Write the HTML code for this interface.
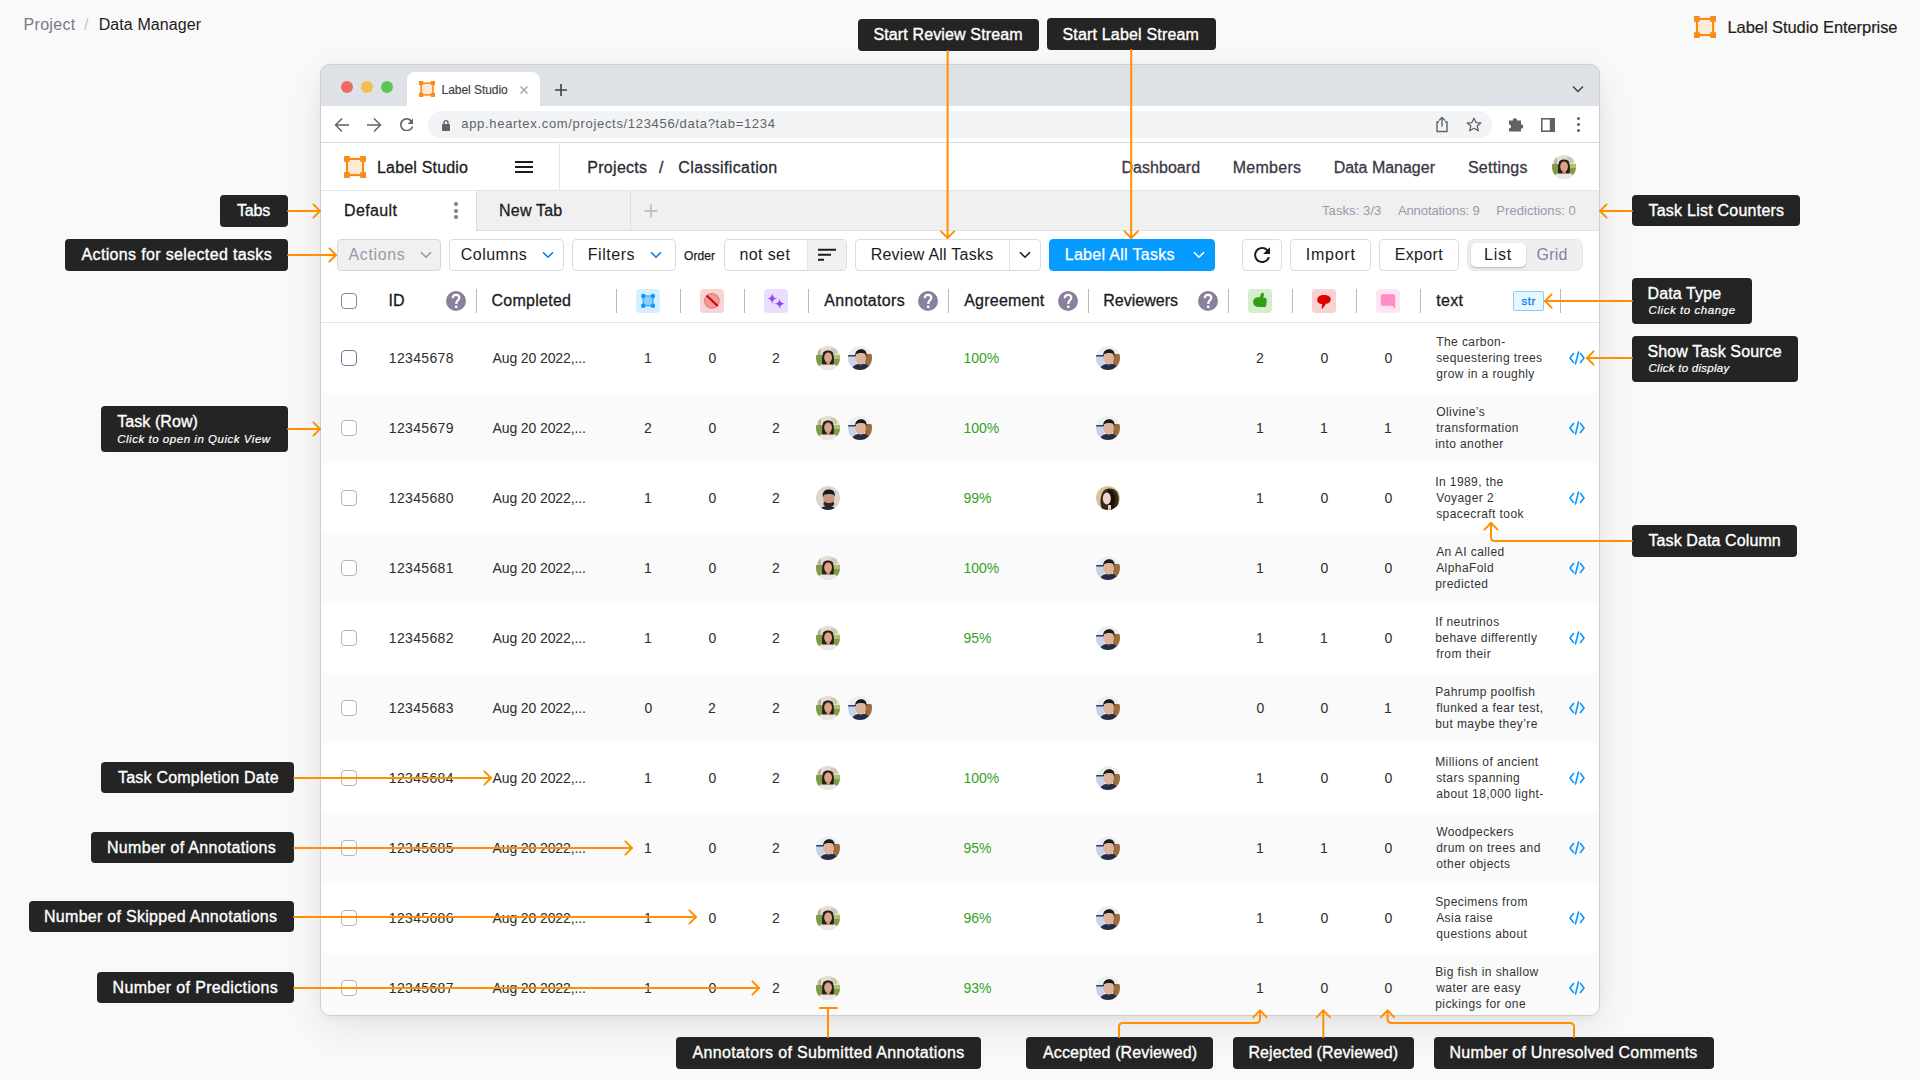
<!DOCTYPE html><html><head><meta charset="utf-8"><style>
*{box-sizing:border-box;margin:0;padding:0}
html,body{width:1920px;height:1080px;overflow:hidden;background:#f9f9f9;font-family:"Liberation Sans", sans-serif;color:#1f1f1f}
.abs{position:absolute}
.t{position:absolute;white-space:nowrap;line-height:1}
.win{position:absolute;left:320px;top:64px;width:1280px;height:952px;border-radius:10px;overflow:hidden;background:#fff;box-shadow:0 12px 40px rgba(0,0,0,.085),0 2px 8px rgba(0,0,0,.04)}
.wb{position:absolute;left:320px;top:64px;width:1280px;height:952px;border-radius:10px;border:1px solid #cfcfd2}
.in{position:absolute;left:-320px;top:-64px;width:1920px;height:1080px}
.btn{position:absolute;top:239px;height:32px;border:1px solid #dcdce0;border-radius:4px;background:#fff}
.co{position:absolute;background:#242424;border-radius:4px}
.sep{position:absolute;width:1px;height:24px;top:289px;background:#b9b9bd}
.q{position:absolute;width:20px;height:20px;top:291px;border-radius:50%;background:#8a7f9d}
.cb{position:absolute;width:16px;height:16px;border:1.3px solid #c9c5d1;border-radius:4px;background:#fff}
.av{position:absolute;width:24px;height:24px;border-radius:50%;overflow:hidden}
</style></head><body>
<div class="t" style="left:23.50px;top:16.60px;font-size:16px;color:#7f7490;letter-spacing:0.317px;">Project</div>
<div class="t" style="left:84.00px;top:16.60px;font-size:16px;color:#c5bfcf;">/</div>
<div class="t" style="left:98.70px;top:16.60px;font-size:16px;color:#1c1b22;letter-spacing:0.091px;">Data Manager</div>
<svg class="abs" style="left:1694px;top:16px" width="22" height="22" viewBox="0 0 22 22"><rect x="2.9" y="2.9" width="16.2" height="16.2" fill="#fde9d5" stroke="#ff8500" stroke-width="2"/><rect x="0" y="0" width="5.8" height="5.8" fill="#f98b18"/><rect x="16.2" y="0" width="5.8" height="5.8" fill="#f98b18"/><rect x="0" y="16.2" width="5.8" height="5.8" fill="#f98b18"/><rect x="16.2" y="16.2" width="5.8" height="5.8" fill="#f98b18"/></svg>
<div class="t" style="left:1727.50px;top:19.10px;font-size:16.5px;color:#1f1f22;letter-spacing:-0.068px;-webkit-text-stroke:0.2px #1f1f22;">Label Studio Enterprise</div>
<div class="win"><div class="in">
<div class="abs" style="left:320px;top:64px;width:1280px;height:42px;background:#dee1e6"></div>
<div class="abs" style="left:341px;top:80.5px;width:12px;height:12px;border-radius:50%;background:#ed6a5e"></div>
<div class="abs" style="left:361px;top:80.5px;width:12px;height:12px;border-radius:50%;background:#f4bf4f"></div>
<div class="abs" style="left:381px;top:80.5px;width:12px;height:12px;border-radius:50%;background:#61c554"></div>
<div class="abs" style="left:407px;top:72px;width:133px;height:34px;background:#fff;border-radius:8px 8px 0 0"></div>
<svg class="abs" style="left:419px;top:81px" width="16" height="16" viewBox="0 0 22 22"><rect x="2.9" y="2.9" width="16.2" height="16.2" fill="#fde9d5" stroke="#ff8500" stroke-width="2"/><rect x="0" y="0" width="5.8" height="5.8" fill="#f98b18"/><rect x="16.2" y="0" width="5.8" height="5.8" fill="#f98b18"/><rect x="0" y="16.2" width="5.8" height="5.8" fill="#f98b18"/><rect x="16.2" y="16.2" width="5.8" height="5.8" fill="#f98b18"/></svg>
<div class="t" style="left:441.50px;top:83.70px;font-size:12px;color:#3c4043;letter-spacing:-0.045px;-webkit-text-stroke:0.15px #3c4043;">Label Studio</div>
<svg class="abs" style="left:519px;top:85px" width="10" height="10" viewBox="0 0 10 10"><path d="M1.5 1.5L8.5 8.5M8.5 1.5L1.5 8.5" stroke="#9aa0a6" stroke-width="1.2"/></svg>
<svg class="abs" style="left:554px;top:83px" width="14" height="14" viewBox="0 0 14 14"><path d="M7 1V13M1 7H13" stroke="#3c4043" stroke-width="1.6"/></svg>
<svg class="abs" style="left:1572px;top:84px" width="12" height="10" viewBox="0 0 12 10"><path d="M1 2.5L6 7.5L11 2.5" fill="none" stroke="#3c4043" stroke-width="1.5"/></svg>
<div class="abs" style="left:320px;top:142px;width:1280px;height:1px;background:#dadce0"></div>
<svg class="abs" style="left:333px;top:115.5px" width="18" height="18" viewBox="0 0 18 18"><path d="M16 9H3M9 2.5L2.5 9L9 15.5" fill="none" stroke="#5f6368" stroke-width="1.45"/></svg>
<svg class="abs" style="left:365px;top:115.5px" width="18" height="18" viewBox="0 0 18 18"><path d="M2 9H15M9 2.5L15.5 9L9 15.5" fill="none" stroke="#5f6368" stroke-width="1.45"/></svg>
<svg class="abs" style="left:399.5px;top:117.8px" width="13.5" height="13.5" viewBox="4 4 16 16"><path d="M17.65 6.35A7.958 7.958 0 0 0 12 4c-4.42 0-7.99 3.58-7.99 8s3.57 8 7.99 8c3.73 0 6.84-2.55 7.73-6h-2.08A5.99 5.99 0 0 1 12 18c-3.31 0-6-2.69-6-6s2.69-6 6-6c1.66 0 3.14.69 4.22 1.78L13 11h7V4l-2.35 2.35z" fill="#5f6368"/></svg>
<div class="abs" style="left:428px;top:110.5px;width:1064px;height:27.5px;border-radius:14px;background:#f1f3f4"></div>
<svg class="abs" style="left:441px;top:117.5px" width="10" height="14" viewBox="0 0 10 14"><path d="M3 6V4.6A2 2 0 0 1 7 4.6V6" fill="none" stroke="#5f6368" stroke-width="1.4"/><rect x="1" y="6" width="8" height="7" rx="1" fill="#5f6368"/></svg>
<div class="t" style="left:461.30px;top:117.45px;font-size:13px;color:#5f6368;letter-spacing:0.680px;">app.heartex.com/projects/123456/data?tab=1234</div>
<svg class="abs" style="left:1434px;top:116px" width="16" height="17" viewBox="0 0 16 17"><path d="M5 6H3V15.5H13V6H11" fill="none" stroke="#5f6368" stroke-width="1.4"/><path d="M8 1.5V10.5M5 4.5L8 1.5L11 4.5" fill="none" stroke="#5f6368" stroke-width="1.4"/></svg>
<svg class="abs" style="left:1466px;top:117px" width="16" height="15" viewBox="0 0 16 15"><path d="M8 1.2L10 5.6L14.8 6L11.2 9.1L12.3 13.8L8 11.3L3.7 13.8L4.8 9.1L1.2 6L6 5.6Z" fill="none" stroke="#5f6368" stroke-width="1.3" stroke-linejoin="round"/></svg>
<svg class="abs" style="left:1508px;top:116px" width="17" height="17" viewBox="0 0 17 17"><path d="M1 4.5H4.6A2.3 2.3 0 0 1 9.2 4.5H13V8.2A2.3 2.3 0 0 1 13 12.8V15.5H1V12.6A2 2 0 0 0 1 8.6Z" fill="#5f6368"/></svg>
<svg class="abs" style="left:1541px;top:117.5px" width="14" height="14" viewBox="0 0 14 14"><rect x="0.8" y="0.8" width="12.4" height="12.4" fill="none" stroke="#5f6368" stroke-width="1.6"/><rect x="8.8" y="0.8" width="4.4" height="12.4" fill="#5f6368"/></svg>
<div class="abs" style="left:1577px;top:117.0px;width:3px;height:3px;border-radius:50%;background:#5f6368"></div>
<div class="abs" style="left:1577px;top:123.0px;width:3px;height:3px;border-radius:50%;background:#5f6368"></div>
<div class="abs" style="left:1577px;top:129.0px;width:3px;height:3px;border-radius:50%;background:#5f6368"></div>
<div class="abs" style="left:320px;top:190px;width:1280px;height:1px;background:#e6e6ea"></div>
<svg class="abs" style="left:344px;top:156px" width="22" height="22" viewBox="0 0 22 22"><rect x="2.9" y="2.9" width="16.2" height="16.2" fill="#fde9d5" stroke="#ff8500" stroke-width="2"/><rect x="0" y="0" width="5.8" height="5.8" fill="#f98b18"/><rect x="16.2" y="0" width="5.8" height="5.8" fill="#f98b18"/><rect x="0" y="16.2" width="5.8" height="5.8" fill="#f98b18"/><rect x="16.2" y="16.2" width="5.8" height="5.8" fill="#f98b18"/></svg>
<div class="t" style="left:377.00px;top:160.40px;font-size:16px;color:#1c1b22;letter-spacing:0.182px;-webkit-text-stroke:0.3px #1c1b22;">Label Studio</div>
<div class="abs" style="left:515px;top:161px;width:18px;height:2px;background:#1c1b22"></div>
<div class="abs" style="left:515px;top:166px;width:18px;height:2px;background:#1c1b22"></div>
<div class="abs" style="left:515px;top:171px;width:18px;height:2px;background:#1c1b22"></div>
<div class="abs" style="left:559px;top:143px;width:1px;height:47px;background:#e6e6ea"></div>
<div class="t" style="left:587.30px;top:160.00px;font-size:16px;color:#2c2b33;letter-spacing:0.286px;-webkit-text-stroke:0.3px #2c2b33;">Projects</div>
<div class="t" style="left:659.00px;top:160.00px;font-size:16px;color:#2c2b33;-webkit-text-stroke:0.3px #2c2b33;">/</div>
<div class="t" style="left:678.30px;top:160.00px;font-size:16px;color:#2c2b33;letter-spacing:0.362px;-webkit-text-stroke:0.3px #2c2b33;">Classification</div>
<div class="t" style="left:1121.50px;top:159.70px;font-size:16px;color:#3b3846;letter-spacing:0.037px;-webkit-text-stroke:0.3px #3b3846;">Dashboard</div>
<div class="t" style="left:1232.70px;top:159.70px;font-size:16px;color:#3b3846;letter-spacing:0.283px;-webkit-text-stroke:0.3px #3b3846;">Members</div>
<div class="t" style="left:1333.70px;top:159.70px;font-size:16px;color:#3b3846;letter-spacing:-0.009px;-webkit-text-stroke:0.3px #3b3846;">Data Manager</div>
<div class="t" style="left:1467.90px;top:159.70px;font-size:16px;color:#3b3846;letter-spacing:0.257px;-webkit-text-stroke:0.3px #3b3846;">Settings</div>
<div class="av" style="left:1552px;top:155px"><svg width="24" height="24" viewBox="0 0 24 24"><rect width="24" height="24" fill="#e3ddd2"/><rect x="2" y="1" width="3" height="9" fill="#bfb3a2"/><rect x="15" y="2" width="6" height="6" fill="#d2c6b4"/><rect y="9" width="24" height="11" fill="#7c9c48"/><rect x="16" y="9" width="8" height="4" fill="#a9c56a"/><ellipse cx="12" cy="25" rx="11.5" ry="8" fill="#e9e6e3"/><path d="M6.2 18.5C5.8 13 6 9 7.5 6.2C9 3.8 15 3.8 16.5 6.2C18 9 18.2 13 17.6 18.5Z" fill="#2e1d14"/><ellipse cx="12.1" cy="11.6" rx="3.9" ry="5" fill="#d8a48a"/><rect x="10.6" y="15" width="3.2" height="3.5" fill="#cf9a80"/></svg></div>
<div class="abs" style="left:320px;top:191px;width:1280px;height:40px;background:#f0f0f0"></div>
<div class="abs" style="left:320px;top:230px;width:1280px;height:1px;background:#dedee3"></div>
<div class="abs" style="left:320px;top:191px;width:156px;height:40px;background:#fff"></div>
<div class="t" style="left:344.00px;top:203.20px;font-size:16px;color:#1c1b22;letter-spacing:0.383px;-webkit-text-stroke:0.3px #1c1b22;">Default</div>
<div class="abs" style="left:454px;top:202px;width:4px;height:4px;border-radius:50%;background:#7d7a86"></div>
<div class="abs" style="left:454px;top:208.5px;width:4px;height:4px;border-radius:50%;background:#7d7a86"></div>
<div class="abs" style="left:454px;top:215px;width:4px;height:4px;border-radius:50%;background:#7d7a86"></div>
<div class="abs" style="left:476px;top:191px;width:1px;height:40px;background:#dedee3"></div>
<div class="t" style="left:499.00px;top:203.20px;font-size:16px;color:#1c1b22;letter-spacing:0.217px;-webkit-text-stroke:0.3px #1c1b22;">New Tab</div>
<div class="abs" style="left:630px;top:191px;width:1px;height:40px;background:#dedee3"></div>
<svg class="abs" style="left:644px;top:204px" width="14" height="14" viewBox="0 0 14 14"><path d="M7 0.5V13.5M0.5 7H13.5" stroke="#b5b5bb" stroke-width="1.5"/></svg>
<div class="t" style="left:1322.00px;top:204.00px;font-size:13px;color:#9d97aa;letter-spacing:0.089px;">Tasks: 3/3</div>
<div class="t" style="left:1397.90px;top:204.00px;font-size:13px;color:#9d97aa;letter-spacing:-0.092px;">Annotations: 9</div>
<div class="t" style="left:1496.30px;top:204.00px;font-size:13px;color:#9d97aa;letter-spacing:0.054px;">Predictions: 0</div>
<div class="btn" style="left:337px;width:104px;background:#f0f0f0;border-color:#d8d8dc"></div>
<div class="t" style="left:348.50px;top:247.45px;font-size:16px;color:#9d97aa;letter-spacing:0.650px;">Actions</div>
<svg class="abs" style="left:420px;top:251px" width="12" height="8" viewBox="0 0 12 8"><path d="M1 1.2L6 6.2L11 1.2" fill="none" stroke="#9d97aa" stroke-width="1.6"/></svg>
<div class="btn" style="left:449px;width:115px"></div>
<div class="t" style="left:460.70px;top:247.45px;font-size:16px;color:#1c1b22;letter-spacing:0.500px;">Columns</div>
<svg class="abs" style="left:542px;top:251px" width="12" height="8" viewBox="0 0 12 8"><path d="M1 1.2L6 6.2L11 1.2" fill="none" stroke="#0d7cf2" stroke-width="1.6"/></svg>
<div class="btn" style="left:572px;width:104px"></div>
<div class="t" style="left:587.75px;top:247.45px;font-size:16px;color:#1c1b22;letter-spacing:0.542px;">Filters</div>
<svg class="abs" style="left:650px;top:251px" width="12" height="8" viewBox="0 0 12 8"><path d="M1 1.2L6 6.2L11 1.2" fill="none" stroke="#0d7cf2" stroke-width="1.6"/></svg>
<div class="t" style="left:684.00px;top:249.50px;font-size:12px;color:#1c1b22;letter-spacing:0.100px;-webkit-text-stroke:0.25px #1c1b22;">Order</div>
<div class="btn" style="left:724px;width:123px;overflow:hidden"><div class="abs" style="left:82px;top:0;width:40px;height:30px;background:#f0f0f0;border-left:1px solid #e4e4e8"></div></div>
<div class="t" style="left:739.40px;top:247.45px;font-size:16px;color:#1c1b22;letter-spacing:0.400px;">not set</div>
<svg class="abs" style="left:817px;top:248px" width="20" height="14" viewBox="0 0 20 14"><path d="M1 1.8H19M1 6.8H14M1 11.8H7" stroke="#1c1b22" stroke-width="2"/></svg>
<div class="btn" style="left:855px;width:186px"><div class="abs" style="left:153px;top:0;width:1px;height:30px;background:#e4e4e8"></div></div>
<div class="t" style="left:870.70px;top:247.45px;font-size:16px;color:#1c1b22;letter-spacing:0.240px;">Review All Tasks</div>
<svg class="abs" style="left:1019px;top:251px" width="12" height="8" viewBox="0 0 12 8"><path d="M1 1.2L6 6.2L11 1.2" fill="none" stroke="#1c1b22" stroke-width="1.6"/></svg>
<div class="btn" style="left:1049px;width:166px;background:#069bff;border-color:#069bff"></div>
<div class="t" style="left:1064.70px;top:247.45px;font-size:16px;color:#fff;letter-spacing:0.307px;-webkit-text-stroke:0.25px #fff;">Label All Tasks</div>
<svg class="abs" style="left:1193px;top:251px" width="12" height="8" viewBox="0 0 12 8"><path d="M1 1.2L6 6.2L11 1.2" fill="none" stroke="#fff" stroke-width="1.6"/></svg>
<div class="btn" style="left:1242px;width:40px"></div>
<svg class="abs" style="left:1254px;top:247px" width="16.3" height="16" viewBox="4 4 16 16"><path d="M17.65 6.35A7.958 7.958 0 0 0 12 4c-4.42 0-7.99 3.58-7.99 8s3.57 8 7.99 8c3.73 0 6.84-2.55 7.73-6h-2.08A5.99 5.99 0 0 1 12 18c-3.31 0-6-2.69-6-6s2.69-6 6-6c1.66 0 3.14.69 4.22 1.78L13 11h7V4l-2.35 2.35z" fill="#1c1b22"/></svg>
<div class="btn" style="left:1290px;width:81px"></div>
<div class="t" style="left:1305.75px;top:247.45px;font-size:16px;color:#1c1b22;letter-spacing:0.750px;">Import</div>
<div class="btn" style="left:1379px;width:80px"></div>
<div class="t" style="left:1394.75px;top:247.45px;font-size:16px;color:#1c1b22;letter-spacing:0.350px;">Export</div>
<div class="abs" style="left:1467px;top:239px;width:116px;height:32px;border-radius:7px;background:#efeff1;border:1px solid #e6e6ea"></div>
<div class="abs" style="left:1471px;top:243px;width:55px;height:24px;border-radius:5px;background:#fff;box-shadow:0 1px 2px rgba(0,0,0,.25)"></div>
<div class="t" style="left:1484.00px;top:247.45px;font-size:16px;color:#1c1b22;letter-spacing:0.750px;">List</div>
<div class="t" style="left:1536.50px;top:247.45px;font-size:16px;color:#8b80a0;letter-spacing:0.250px;">Grid</div>
<div class="abs" style="left:320px;top:322px;width:1280px;height:1px;background:#e6e6ea"></div>
<div class="cb" style="left:341px;top:293px;border-color:#8b80a0"></div>
<div class="t" style="left:388.50px;top:293.45px;font-size:16px;color:#1c1b22;-webkit-text-stroke:0.3px #1c1b22;">ID</div>
<svg class="abs" style="left:446px;top:291px" width="20" height="20" viewBox="0 0 20 20"><circle cx="10" cy="10" r="10" fill="#8a7f9d"/><path d="M6.7 7.3C6.7 4.9 8.2 3.8 10.1 3.8C12 3.8 13.3 5 13.3 6.7C13.3 9 10.3 9.5 10.3 12.3V13" fill="none" stroke="#fff" stroke-width="2.2"/><rect x="9" y="14.6" width="2.4" height="2.4" fill="#fff"/></svg>
<div class="sep" style="left:476px"></div>
<div class="sep" style="left:616px"></div>
<div class="sep" style="left:680px"></div>
<div class="sep" style="left:744px"></div>
<div class="sep" style="left:808px"></div>
<div class="sep" style="left:948px"></div>
<div class="sep" style="left:1088px"></div>
<div class="sep" style="left:1228px"></div>
<div class="sep" style="left:1292px"></div>
<div class="sep" style="left:1356px"></div>
<div class="sep" style="left:1420px"></div>
<div class="sep" style="left:1560px"></div>
<div class="t" style="left:491.50px;top:293.45px;font-size:16px;color:#1c1b22;letter-spacing:0.262px;-webkit-text-stroke:0.3px #1c1b22;">Completed</div>
<div class="abs" style="left:636px;top:289px;width:24px;height:24px;border-radius:4px;background:#d6efff"><svg class="abs" style="left:0;top:0" width="24" height="24" viewBox="0 0 24 24"><rect x="7.3" y="7" width="9.6" height="9.7" fill="#8dd0ff" stroke="#4db3ff" stroke-width="1.6"/><circle cx="7.3" cy="7" r="2.3" fill="#0a99ff"/><circle cx="16.9" cy="7" r="2.3" fill="#0a99ff"/><circle cx="7.3" cy="16.7" r="2.3" fill="#0a99ff"/><circle cx="16.9" cy="16.7" r="2.3" fill="#0a99ff"/></svg></div>
<div class="abs" style="left:700px;top:289px;width:24px;height:24px;border-radius:4px;background:#f9d4d4"><svg class="abs" style="left:0;top:0" width="24" height="24" viewBox="0 0 24 24"><circle cx="11.9" cy="11.8" r="7.2" fill="#f19c9c" stroke="#ea8080" stroke-width="1.4"/><path d="M6.6 6.5L17.7 17.1" stroke="#dc0000" stroke-width="2.1"/></svg></div>
<div class="abs" style="left:764px;top:289px;width:24px;height:24px;border-radius:4px;background:#ebdefd"><svg class="abs" style="left:0;top:0" width="24" height="24" viewBox="0 0 24 24"><path d="M8.2 4.199999999999999Q8.578 9.222 13.6 9.6Q8.578 9.978 8.2 15.0Q7.821999999999999 9.978 2.799999999999999 9.6Q7.821999999999999 9.222 8.2 4.199999999999999ZM15.7 9.399999999999999Q16.070999999999998 14.328999999999999 21.0 14.7Q16.070999999999998 15.071 15.7 20.0Q15.328999999999999 15.071 10.399999999999999 14.7Q15.328999999999999 14.328999999999999 15.7 9.399999999999999Z" fill="#9146ff"/></svg></div>
<div class="t" style="left:824.20px;top:293.45px;font-size:16px;color:#1c1b22;letter-spacing:0.356px;-webkit-text-stroke:0.3px #1c1b22;">Annotators</div>
<svg class="abs" style="left:918px;top:291px" width="20" height="20" viewBox="0 0 20 20"><circle cx="10" cy="10" r="10" fill="#8a7f9d"/><path d="M6.7 7.3C6.7 4.9 8.2 3.8 10.1 3.8C12 3.8 13.3 5 13.3 6.7C13.3 9 10.3 9.5 10.3 12.3V13" fill="none" stroke="#fff" stroke-width="2.2"/><rect x="9" y="14.6" width="2.4" height="2.4" fill="#fff"/></svg>
<div class="t" style="left:964.20px;top:293.45px;font-size:16px;color:#1c1b22;letter-spacing:0.225px;-webkit-text-stroke:0.3px #1c1b22;">Agreement</div>
<svg class="abs" style="left:1058px;top:291px" width="20" height="20" viewBox="0 0 20 20"><circle cx="10" cy="10" r="10" fill="#8a7f9d"/><path d="M6.7 7.3C6.7 4.9 8.2 3.8 10.1 3.8C12 3.8 13.3 5 13.3 6.7C13.3 9 10.3 9.5 10.3 12.3V13" fill="none" stroke="#fff" stroke-width="2.2"/><rect x="9" y="14.6" width="2.4" height="2.4" fill="#fff"/></svg>
<div class="t" style="left:1103.30px;top:293.45px;font-size:16px;color:#1c1b22;-webkit-text-stroke:0.3px #1c1b22;">Reviewers</div>
<svg class="abs" style="left:1198px;top:291px" width="20" height="20" viewBox="0 0 20 20"><circle cx="10" cy="10" r="10" fill="#8a7f9d"/><path d="M6.7 7.3C6.7 4.9 8.2 3.8 10.1 3.8C12 3.8 13.3 5 13.3 6.7C13.3 9 10.3 9.5 10.3 12.3V13" fill="none" stroke="#fff" stroke-width="2.2"/><rect x="9" y="14.6" width="2.4" height="2.4" fill="#fff"/></svg>
<div class="abs" style="left:1248px;top:289px;width:24px;height:24px;border-radius:4px;background:#d5eccd"><svg class="abs" style="left:0;top:0" width="24" height="24" viewBox="0 0 24 24"><path d="M5.1 13C5.1 10 7.5 8.3 10.5 8.3L11.8 8.3L13 4.8C13.4 3.7 15.3 3.5 15.7 4.6C16.1 5.7 15.7 7.6 15.3 8.6L17.5 8.9C18.6 9.1 18.9 10.5 18.6 12.5L18.2 16.4C18 17.4 17.4 17.9 16.3 17.9L10 17.9C7 17.9 5.1 16 5.1 13Z" fill="#2ea011"/></svg></div>
<div class="abs" style="left:1312px;top:289px;width:24px;height:24px;border-radius:4px;background:#f9d3d3"><svg class="abs" style="left:0;top:0" width="24" height="24" viewBox="0 0 24 24"><path d="M12 5.9C16 5.9 18.8 7.5 18.8 10.5C18.8 13.2 16.5 14.5 14 14.8L10.9 19.3C10.3 20.1 9.4 19.8 9.6 18.9L10.2 15.2C7 15.1 5.2 13.6 5.2 11C5.2 7.7 8 5.9 12 5.9Z" fill="#e00000"/></svg></div>
<div class="abs" style="left:1376px;top:289px;width:24px;height:24px;border-radius:4px;background:#fde5f1"><svg class="abs" style="left:0;top:0" width="24" height="24" viewBox="0 0 24 24"><path d="M6.3 5.2H17.7Q19.2 5.2 19.2 6.7V19.5L16 16.7H6.3Q4.8 16.7 4.8 15.2V6.7Q4.8 5.2 6.3 5.2Z" fill="#ff8bc8"/></svg></div>
<div class="t" style="left:1436.25px;top:293.45px;font-size:16px;color:#1c1b22;letter-spacing:0.333px;-webkit-text-stroke:0.3px #1c1b22;">text</div>
<div class="abs" style="left:1513px;top:291px;width:31px;height:20px;border:1px solid #8ec9ff;background:#e6f9ff;border-radius:2px"></div>
<div class="t" style="left:1521.60px;top:296.40px;font-size:11.5px;color:#1a7cf3;letter-spacing:0.500px;-webkit-text-stroke:0.3px #1a7cf3;">str</div>
<div class="abs" style="left:320px;top:323px;width:1280px;height:70px;background:#fff"></div>
<div class="cb" style="left:341px;top:350px;border-color:#7f7393"></div>
<div class="t" style="left:388.75px;top:350.70px;font-size:14px;color:#2d2d2d;letter-spacing:0.343px;">12345678</div>
<div class="t" style="left:492.50px;top:350.70px;font-size:14px;color:#2d2d2d;letter-spacing:-0.107px;">Aug 20 2022,...</div>
<div class="t" style="left:644.00px;top:350.70px;font-size:14px;color:#2d2d2d;">1</div>
<div class="t" style="left:708.50px;top:350.70px;font-size:14px;color:#2d2d2d;">0</div>
<div class="t" style="left:772.00px;top:350.70px;font-size:14px;color:#2d2d2d;">2</div>
<div class="t" style="left:1256.00px;top:350.70px;font-size:14px;color:#2d2d2d;">2</div>
<div class="t" style="left:1320.50px;top:350.70px;font-size:14px;color:#2d2d2d;">0</div>
<div class="t" style="left:1384.50px;top:350.70px;font-size:14px;color:#2d2d2d;">0</div>
<div class="av" style="left:816px;top:346px"><svg width="24" height="24" viewBox="0 0 24 24"><rect width="24" height="24" fill="#e3ddd2"/><rect x="2" y="1" width="3" height="9" fill="#bfb3a2"/><rect x="15" y="2" width="6" height="6" fill="#d2c6b4"/><rect y="9" width="24" height="11" fill="#7c9c48"/><rect x="16" y="9" width="8" height="4" fill="#a9c56a"/><ellipse cx="12" cy="25" rx="11.5" ry="8" fill="#e9e6e3"/><path d="M6.2 18.5C5.8 13 6 9 7.5 6.2C9 3.8 15 3.8 16.5 6.2C18 9 18.2 13 17.6 18.5Z" fill="#2e1d14"/><ellipse cx="12.1" cy="11.6" rx="3.9" ry="5" fill="#d8a48a"/><rect x="10.6" y="15" width="3.2" height="3.5" fill="#cf9a80"/></svg></div>
<div class="av" style="left:848px;top:346px"><svg width="24" height="24" viewBox="0 0 24 24"><rect width="24" height="24" fill="#eceff2"/><rect x="0" y="9" width="8" height="12" fill="#c9d3e6"/><rect x="0" y="9" width="8" height="1.5" fill="#2c3a66"/><rect x="17" y="8" width="7" height="13" fill="#9b6c3e"/><path d="M3 24C5 19 9 17.5 13.5 17.5C18 17.5 21 19.5 22.5 24Z" fill="#252c45"/><ellipse cx="12.6" cy="12.3" rx="5.3" ry="6.3" fill="#dcb39d"/><path d="M7.2 10C6.8 4.8 10.5 3.2 13.3 3.2C16.8 3.2 19 5.2 18.6 10.5L17.6 8.2C15.5 6.6 10.5 6.6 8.2 8.2Z" fill="#1e1915"/></svg></div>
<div class="t" style="left:963.50px;top:350.70px;font-size:14px;color:#35a21f;">100%</div>
<div class="av" style="left:1096px;top:346px"><svg width="24" height="24" viewBox="0 0 24 24"><rect width="24" height="24" fill="#eceff2"/><rect x="0" y="9" width="8" height="12" fill="#c9d3e6"/><rect x="0" y="9" width="8" height="1.5" fill="#2c3a66"/><rect x="17" y="8" width="7" height="13" fill="#9b6c3e"/><path d="M3 24C5 19 9 17.5 13.5 17.5C18 17.5 21 19.5 22.5 24Z" fill="#252c45"/><ellipse cx="12.6" cy="12.3" rx="5.3" ry="6.3" fill="#dcb39d"/><path d="M7.2 10C6.8 4.8 10.5 3.2 13.3 3.2C16.8 3.2 19 5.2 18.6 10.5L17.6 8.2C15.5 6.6 10.5 6.6 8.2 8.2Z" fill="#1e1915"/></svg></div>
<div class="t" style="left:1436.20px;top:336.20px;font-size:12px;color:#333;letter-spacing:0.424px;">The carbon-</div>
<div class="t" style="left:1436.20px;top:352.20px;font-size:12px;color:#333;letter-spacing:0.424px;">sequestering trees</div>
<div class="t" style="left:1436.20px;top:368.20px;font-size:12px;color:#333;letter-spacing:0.424px;">grow in a roughly</div>
<svg class="abs" style="left:1569px;top:351px" width="16" height="14" viewBox="0 0 16 14"><path d="M4.5 2.5L1 7L4.5 11.5M11.5 2.5L15 7L11.5 11.5M9.5 1L6.5 13" fill="none" stroke="#0d95ff" stroke-width="1.6" stroke-linecap="round" stroke-linejoin="round"/></svg>
<div class="abs" style="left:320px;top:393px;width:1280px;height:70px;background:#fafafa"></div>
<div class="cb" style="left:341px;top:420px;border-color:#b9b2c6"></div>
<div class="t" style="left:388.75px;top:420.70px;font-size:14px;color:#2d2d2d;letter-spacing:0.343px;">12345679</div>
<div class="t" style="left:492.50px;top:420.70px;font-size:14px;color:#2d2d2d;letter-spacing:-0.107px;">Aug 20 2022,...</div>
<div class="t" style="left:644.00px;top:420.70px;font-size:14px;color:#2d2d2d;">2</div>
<div class="t" style="left:708.50px;top:420.70px;font-size:14px;color:#2d2d2d;">0</div>
<div class="t" style="left:772.00px;top:420.70px;font-size:14px;color:#2d2d2d;">2</div>
<div class="t" style="left:1256.00px;top:420.70px;font-size:14px;color:#2d2d2d;">1</div>
<div class="t" style="left:1320.00px;top:420.70px;font-size:14px;color:#2d2d2d;">1</div>
<div class="t" style="left:1384.00px;top:420.70px;font-size:14px;color:#2d2d2d;">1</div>
<div class="av" style="left:816px;top:416px"><svg width="24" height="24" viewBox="0 0 24 24"><rect width="24" height="24" fill="#e3ddd2"/><rect x="2" y="1" width="3" height="9" fill="#bfb3a2"/><rect x="15" y="2" width="6" height="6" fill="#d2c6b4"/><rect y="9" width="24" height="11" fill="#7c9c48"/><rect x="16" y="9" width="8" height="4" fill="#a9c56a"/><ellipse cx="12" cy="25" rx="11.5" ry="8" fill="#e9e6e3"/><path d="M6.2 18.5C5.8 13 6 9 7.5 6.2C9 3.8 15 3.8 16.5 6.2C18 9 18.2 13 17.6 18.5Z" fill="#2e1d14"/><ellipse cx="12.1" cy="11.6" rx="3.9" ry="5" fill="#d8a48a"/><rect x="10.6" y="15" width="3.2" height="3.5" fill="#cf9a80"/></svg></div>
<div class="av" style="left:848px;top:416px"><svg width="24" height="24" viewBox="0 0 24 24"><rect width="24" height="24" fill="#eceff2"/><rect x="0" y="9" width="8" height="12" fill="#c9d3e6"/><rect x="0" y="9" width="8" height="1.5" fill="#2c3a66"/><rect x="17" y="8" width="7" height="13" fill="#9b6c3e"/><path d="M3 24C5 19 9 17.5 13.5 17.5C18 17.5 21 19.5 22.5 24Z" fill="#252c45"/><ellipse cx="12.6" cy="12.3" rx="5.3" ry="6.3" fill="#dcb39d"/><path d="M7.2 10C6.8 4.8 10.5 3.2 13.3 3.2C16.8 3.2 19 5.2 18.6 10.5L17.6 8.2C15.5 6.6 10.5 6.6 8.2 8.2Z" fill="#1e1915"/></svg></div>
<div class="t" style="left:963.50px;top:420.70px;font-size:14px;color:#35a21f;">100%</div>
<div class="av" style="left:1096px;top:416px"><svg width="24" height="24" viewBox="0 0 24 24"><rect width="24" height="24" fill="#eceff2"/><rect x="0" y="9" width="8" height="12" fill="#c9d3e6"/><rect x="0" y="9" width="8" height="1.5" fill="#2c3a66"/><rect x="17" y="8" width="7" height="13" fill="#9b6c3e"/><path d="M3 24C5 19 9 17.5 13.5 17.5C18 17.5 21 19.5 22.5 24Z" fill="#252c45"/><ellipse cx="12.6" cy="12.3" rx="5.3" ry="6.3" fill="#dcb39d"/><path d="M7.2 10C6.8 4.8 10.5 3.2 13.3 3.2C16.8 3.2 19 5.2 18.6 10.5L17.6 8.2C15.5 6.6 10.5 6.6 8.2 8.2Z" fill="#1e1915"/></svg></div>
<div class="t" style="left:1436.20px;top:406.20px;font-size:12px;color:#333;letter-spacing:0.424px;">Olivine’s</div>
<div class="t" style="left:1436.20px;top:422.20px;font-size:12px;color:#333;letter-spacing:0.424px;">transformation</div>
<div class="t" style="left:1435.20px;top:438.20px;font-size:12px;color:#333;letter-spacing:0.424px;">into another</div>
<svg class="abs" style="left:1569px;top:421px" width="16" height="14" viewBox="0 0 16 14"><path d="M4.5 2.5L1 7L4.5 11.5M11.5 2.5L15 7L11.5 11.5M9.5 1L6.5 13" fill="none" stroke="#0d95ff" stroke-width="1.6" stroke-linecap="round" stroke-linejoin="round"/></svg>
<div class="abs" style="left:320px;top:463px;width:1280px;height:70px;background:#fff"></div>
<div class="cb" style="left:341px;top:490px;border-color:#b9b2c6"></div>
<div class="t" style="left:388.75px;top:490.70px;font-size:14px;color:#2d2d2d;letter-spacing:0.343px;">12345680</div>
<div class="t" style="left:492.50px;top:490.70px;font-size:14px;color:#2d2d2d;letter-spacing:-0.107px;">Aug 20 2022,...</div>
<div class="t" style="left:644.00px;top:490.70px;font-size:14px;color:#2d2d2d;">1</div>
<div class="t" style="left:708.50px;top:490.70px;font-size:14px;color:#2d2d2d;">0</div>
<div class="t" style="left:772.00px;top:490.70px;font-size:14px;color:#2d2d2d;">2</div>
<div class="t" style="left:1256.00px;top:490.70px;font-size:14px;color:#2d2d2d;">1</div>
<div class="t" style="left:1320.50px;top:490.70px;font-size:14px;color:#2d2d2d;">0</div>
<div class="t" style="left:1384.50px;top:490.70px;font-size:14px;color:#2d2d2d;">0</div>
<div class="av" style="left:816px;top:486px"><svg width="24" height="24" viewBox="0 0 24 24"><rect width="24" height="24" fill="#ddd6d0"/><path d="M4 24C5 21 8 20 12 20C16 20 19 21 20 24Z" fill="#1f2636"/><ellipse cx="12.8" cy="12.8" rx="5.6" ry="7" fill="#c9987c"/><path d="M7.3 18C8.5 22 17 22 18.4 18L17.5 15.5C15.5 17.5 10.5 17.5 8.2 15.5Z" fill="#2a2622"/><path d="M6.8 11.5C6.2 4.5 9.5 3.5 12.8 3.5C17 3.5 19.5 5.5 18.8 11L17.8 8.8C15.5 7.8 10.5 7.8 8 9Z" fill="#151a26"/></svg></div>
<div class="t" style="left:963.50px;top:490.70px;font-size:14px;color:#35a21f;">99%</div>
<div class="av" style="left:1096px;top:486px"><svg width="24" height="24" viewBox="0 0 24 24"><rect width="24" height="24" fill="#d6c59c"/><path d="M7 24C3 20 4 8 8 4.5C12 1.5 18 2 21 6C24 12 23 20 19 24Z" fill="#3a2616"/><path d="M12 3.5C16 3.5 19.5 8 19 15C18.5 20 17 23 16 24H13Z" fill="#1a120c"/><ellipse cx="10.8" cy="12.5" rx="4" ry="6" fill="#ead6cf"/><rect x="12" y="19" width="3" height="5" fill="#e8d2c8"/></svg></div>
<div class="t" style="left:1435.20px;top:476.20px;font-size:12px;color:#333;letter-spacing:0.424px;">In 1989, the</div>
<div class="t" style="left:1436.20px;top:492.20px;font-size:12px;color:#333;letter-spacing:0.424px;">Voyager 2</div>
<div class="t" style="left:1436.20px;top:508.20px;font-size:12px;color:#333;letter-spacing:0.424px;">spacecraft took</div>
<svg class="abs" style="left:1569px;top:491px" width="16" height="14" viewBox="0 0 16 14"><path d="M4.5 2.5L1 7L4.5 11.5M11.5 2.5L15 7L11.5 11.5M9.5 1L6.5 13" fill="none" stroke="#0d95ff" stroke-width="1.6" stroke-linecap="round" stroke-linejoin="round"/></svg>
<div class="abs" style="left:320px;top:533px;width:1280px;height:70px;background:#fafafa"></div>
<div class="cb" style="left:341px;top:560px;border-color:#b9b2c6"></div>
<div class="t" style="left:388.75px;top:560.70px;font-size:14px;color:#2d2d2d;letter-spacing:0.343px;">12345681</div>
<div class="t" style="left:492.50px;top:560.70px;font-size:14px;color:#2d2d2d;letter-spacing:-0.107px;">Aug 20 2022,...</div>
<div class="t" style="left:644.00px;top:560.70px;font-size:14px;color:#2d2d2d;">1</div>
<div class="t" style="left:708.50px;top:560.70px;font-size:14px;color:#2d2d2d;">0</div>
<div class="t" style="left:772.00px;top:560.70px;font-size:14px;color:#2d2d2d;">2</div>
<div class="t" style="left:1256.00px;top:560.70px;font-size:14px;color:#2d2d2d;">1</div>
<div class="t" style="left:1320.50px;top:560.70px;font-size:14px;color:#2d2d2d;">0</div>
<div class="t" style="left:1384.50px;top:560.70px;font-size:14px;color:#2d2d2d;">0</div>
<div class="av" style="left:816px;top:556px"><svg width="24" height="24" viewBox="0 0 24 24"><rect width="24" height="24" fill="#e3ddd2"/><rect x="2" y="1" width="3" height="9" fill="#bfb3a2"/><rect x="15" y="2" width="6" height="6" fill="#d2c6b4"/><rect y="9" width="24" height="11" fill="#7c9c48"/><rect x="16" y="9" width="8" height="4" fill="#a9c56a"/><ellipse cx="12" cy="25" rx="11.5" ry="8" fill="#e9e6e3"/><path d="M6.2 18.5C5.8 13 6 9 7.5 6.2C9 3.8 15 3.8 16.5 6.2C18 9 18.2 13 17.6 18.5Z" fill="#2e1d14"/><ellipse cx="12.1" cy="11.6" rx="3.9" ry="5" fill="#d8a48a"/><rect x="10.6" y="15" width="3.2" height="3.5" fill="#cf9a80"/></svg></div>
<div class="t" style="left:963.50px;top:560.70px;font-size:14px;color:#35a21f;">100%</div>
<div class="av" style="left:1096px;top:556px"><svg width="24" height="24" viewBox="0 0 24 24"><rect width="24" height="24" fill="#eceff2"/><rect x="0" y="9" width="8" height="12" fill="#c9d3e6"/><rect x="0" y="9" width="8" height="1.5" fill="#2c3a66"/><rect x="17" y="8" width="7" height="13" fill="#9b6c3e"/><path d="M3 24C5 19 9 17.5 13.5 17.5C18 17.5 21 19.5 22.5 24Z" fill="#252c45"/><ellipse cx="12.6" cy="12.3" rx="5.3" ry="6.3" fill="#dcb39d"/><path d="M7.2 10C6.8 4.8 10.5 3.2 13.3 3.2C16.8 3.2 19 5.2 18.6 10.5L17.6 8.2C15.5 6.6 10.5 6.6 8.2 8.2Z" fill="#1e1915"/></svg></div>
<div class="t" style="left:1436.20px;top:546.20px;font-size:12px;color:#333;letter-spacing:0.424px;">An AI called</div>
<div class="t" style="left:1436.20px;top:562.20px;font-size:12px;color:#333;letter-spacing:0.424px;">AlphaFold</div>
<div class="t" style="left:1435.20px;top:578.20px;font-size:12px;color:#333;letter-spacing:0.424px;">predicted</div>
<svg class="abs" style="left:1569px;top:561px" width="16" height="14" viewBox="0 0 16 14"><path d="M4.5 2.5L1 7L4.5 11.5M11.5 2.5L15 7L11.5 11.5M9.5 1L6.5 13" fill="none" stroke="#0d95ff" stroke-width="1.6" stroke-linecap="round" stroke-linejoin="round"/></svg>
<div class="abs" style="left:320px;top:603px;width:1280px;height:70px;background:#fff"></div>
<div class="cb" style="left:341px;top:630px;border-color:#b9b2c6"></div>
<div class="t" style="left:388.75px;top:630.70px;font-size:14px;color:#2d2d2d;letter-spacing:0.343px;">12345682</div>
<div class="t" style="left:492.50px;top:630.70px;font-size:14px;color:#2d2d2d;letter-spacing:-0.107px;">Aug 20 2022,...</div>
<div class="t" style="left:644.00px;top:630.70px;font-size:14px;color:#2d2d2d;">1</div>
<div class="t" style="left:708.50px;top:630.70px;font-size:14px;color:#2d2d2d;">0</div>
<div class="t" style="left:772.00px;top:630.70px;font-size:14px;color:#2d2d2d;">2</div>
<div class="t" style="left:1256.00px;top:630.70px;font-size:14px;color:#2d2d2d;">1</div>
<div class="t" style="left:1320.00px;top:630.70px;font-size:14px;color:#2d2d2d;">1</div>
<div class="t" style="left:1384.50px;top:630.70px;font-size:14px;color:#2d2d2d;">0</div>
<div class="av" style="left:816px;top:626px"><svg width="24" height="24" viewBox="0 0 24 24"><rect width="24" height="24" fill="#e3ddd2"/><rect x="2" y="1" width="3" height="9" fill="#bfb3a2"/><rect x="15" y="2" width="6" height="6" fill="#d2c6b4"/><rect y="9" width="24" height="11" fill="#7c9c48"/><rect x="16" y="9" width="8" height="4" fill="#a9c56a"/><ellipse cx="12" cy="25" rx="11.5" ry="8" fill="#e9e6e3"/><path d="M6.2 18.5C5.8 13 6 9 7.5 6.2C9 3.8 15 3.8 16.5 6.2C18 9 18.2 13 17.6 18.5Z" fill="#2e1d14"/><ellipse cx="12.1" cy="11.6" rx="3.9" ry="5" fill="#d8a48a"/><rect x="10.6" y="15" width="3.2" height="3.5" fill="#cf9a80"/></svg></div>
<div class="t" style="left:963.50px;top:630.70px;font-size:14px;color:#35a21f;">95%</div>
<div class="av" style="left:1096px;top:626px"><svg width="24" height="24" viewBox="0 0 24 24"><rect width="24" height="24" fill="#eceff2"/><rect x="0" y="9" width="8" height="12" fill="#c9d3e6"/><rect x="0" y="9" width="8" height="1.5" fill="#2c3a66"/><rect x="17" y="8" width="7" height="13" fill="#9b6c3e"/><path d="M3 24C5 19 9 17.5 13.5 17.5C18 17.5 21 19.5 22.5 24Z" fill="#252c45"/><ellipse cx="12.6" cy="12.3" rx="5.3" ry="6.3" fill="#dcb39d"/><path d="M7.2 10C6.8 4.8 10.5 3.2 13.3 3.2C16.8 3.2 19 5.2 18.6 10.5L17.6 8.2C15.5 6.6 10.5 6.6 8.2 8.2Z" fill="#1e1915"/></svg></div>
<div class="t" style="left:1435.20px;top:616.20px;font-size:12px;color:#333;letter-spacing:0.424px;">If neutrinos</div>
<div class="t" style="left:1435.20px;top:632.20px;font-size:12px;color:#333;letter-spacing:0.424px;">behave differently</div>
<div class="t" style="left:1436.20px;top:648.20px;font-size:12px;color:#333;letter-spacing:0.424px;">from their</div>
<svg class="abs" style="left:1569px;top:631px" width="16" height="14" viewBox="0 0 16 14"><path d="M4.5 2.5L1 7L4.5 11.5M11.5 2.5L15 7L11.5 11.5M9.5 1L6.5 13" fill="none" stroke="#0d95ff" stroke-width="1.6" stroke-linecap="round" stroke-linejoin="round"/></svg>
<div class="abs" style="left:320px;top:673px;width:1280px;height:70px;background:#fafafa"></div>
<div class="cb" style="left:341px;top:700px;border-color:#b9b2c6"></div>
<div class="t" style="left:388.75px;top:700.70px;font-size:14px;color:#2d2d2d;letter-spacing:0.343px;">12345683</div>
<div class="t" style="left:492.50px;top:700.70px;font-size:14px;color:#2d2d2d;letter-spacing:-0.107px;">Aug 20 2022,...</div>
<div class="t" style="left:644.50px;top:700.70px;font-size:14px;color:#2d2d2d;">0</div>
<div class="t" style="left:708.00px;top:700.70px;font-size:14px;color:#2d2d2d;">2</div>
<div class="t" style="left:772.00px;top:700.70px;font-size:14px;color:#2d2d2d;">2</div>
<div class="t" style="left:1256.50px;top:700.70px;font-size:14px;color:#2d2d2d;">0</div>
<div class="t" style="left:1320.50px;top:700.70px;font-size:14px;color:#2d2d2d;">0</div>
<div class="t" style="left:1384.00px;top:700.70px;font-size:14px;color:#2d2d2d;">1</div>
<div class="av" style="left:816px;top:696px"><svg width="24" height="24" viewBox="0 0 24 24"><rect width="24" height="24" fill="#e3ddd2"/><rect x="2" y="1" width="3" height="9" fill="#bfb3a2"/><rect x="15" y="2" width="6" height="6" fill="#d2c6b4"/><rect y="9" width="24" height="11" fill="#7c9c48"/><rect x="16" y="9" width="8" height="4" fill="#a9c56a"/><ellipse cx="12" cy="25" rx="11.5" ry="8" fill="#e9e6e3"/><path d="M6.2 18.5C5.8 13 6 9 7.5 6.2C9 3.8 15 3.8 16.5 6.2C18 9 18.2 13 17.6 18.5Z" fill="#2e1d14"/><ellipse cx="12.1" cy="11.6" rx="3.9" ry="5" fill="#d8a48a"/><rect x="10.6" y="15" width="3.2" height="3.5" fill="#cf9a80"/></svg></div>
<div class="av" style="left:848px;top:696px"><svg width="24" height="24" viewBox="0 0 24 24"><rect width="24" height="24" fill="#eceff2"/><rect x="0" y="9" width="8" height="12" fill="#c9d3e6"/><rect x="0" y="9" width="8" height="1.5" fill="#2c3a66"/><rect x="17" y="8" width="7" height="13" fill="#9b6c3e"/><path d="M3 24C5 19 9 17.5 13.5 17.5C18 17.5 21 19.5 22.5 24Z" fill="#252c45"/><ellipse cx="12.6" cy="12.3" rx="5.3" ry="6.3" fill="#dcb39d"/><path d="M7.2 10C6.8 4.8 10.5 3.2 13.3 3.2C16.8 3.2 19 5.2 18.6 10.5L17.6 8.2C15.5 6.6 10.5 6.6 8.2 8.2Z" fill="#1e1915"/></svg></div>
<div class="av" style="left:1096px;top:696px"><svg width="24" height="24" viewBox="0 0 24 24"><rect width="24" height="24" fill="#eceff2"/><rect x="0" y="9" width="8" height="12" fill="#c9d3e6"/><rect x="0" y="9" width="8" height="1.5" fill="#2c3a66"/><rect x="17" y="8" width="7" height="13" fill="#9b6c3e"/><path d="M3 24C5 19 9 17.5 13.5 17.5C18 17.5 21 19.5 22.5 24Z" fill="#252c45"/><ellipse cx="12.6" cy="12.3" rx="5.3" ry="6.3" fill="#dcb39d"/><path d="M7.2 10C6.8 4.8 10.5 3.2 13.3 3.2C16.8 3.2 19 5.2 18.6 10.5L17.6 8.2C15.5 6.6 10.5 6.6 8.2 8.2Z" fill="#1e1915"/></svg></div>
<div class="t" style="left:1435.20px;top:686.20px;font-size:12px;color:#333;letter-spacing:0.424px;">Pahrump poolfish</div>
<div class="t" style="left:1436.20px;top:702.20px;font-size:12px;color:#333;letter-spacing:0.424px;">flunked a fear test,</div>
<div class="t" style="left:1435.20px;top:718.20px;font-size:12px;color:#333;letter-spacing:0.424px;">but maybe they’re</div>
<svg class="abs" style="left:1569px;top:701px" width="16" height="14" viewBox="0 0 16 14"><path d="M4.5 2.5L1 7L4.5 11.5M11.5 2.5L15 7L11.5 11.5M9.5 1L6.5 13" fill="none" stroke="#0d95ff" stroke-width="1.6" stroke-linecap="round" stroke-linejoin="round"/></svg>
<div class="abs" style="left:320px;top:743px;width:1280px;height:70px;background:#fff"></div>
<div class="cb" style="left:341px;top:770px;border-color:#b9b2c6"></div>
<div class="t" style="left:388.75px;top:770.70px;font-size:14px;color:#2d2d2d;letter-spacing:0.343px;">12345684</div>
<div class="t" style="left:492.50px;top:770.70px;font-size:14px;color:#2d2d2d;letter-spacing:-0.107px;">Aug 20 2022,...</div>
<div class="t" style="left:644.00px;top:770.70px;font-size:14px;color:#2d2d2d;">1</div>
<div class="t" style="left:708.50px;top:770.70px;font-size:14px;color:#2d2d2d;">0</div>
<div class="t" style="left:772.00px;top:770.70px;font-size:14px;color:#2d2d2d;">2</div>
<div class="t" style="left:1256.00px;top:770.70px;font-size:14px;color:#2d2d2d;">1</div>
<div class="t" style="left:1320.50px;top:770.70px;font-size:14px;color:#2d2d2d;">0</div>
<div class="t" style="left:1384.50px;top:770.70px;font-size:14px;color:#2d2d2d;">0</div>
<div class="av" style="left:816px;top:766px"><svg width="24" height="24" viewBox="0 0 24 24"><rect width="24" height="24" fill="#e3ddd2"/><rect x="2" y="1" width="3" height="9" fill="#bfb3a2"/><rect x="15" y="2" width="6" height="6" fill="#d2c6b4"/><rect y="9" width="24" height="11" fill="#7c9c48"/><rect x="16" y="9" width="8" height="4" fill="#a9c56a"/><ellipse cx="12" cy="25" rx="11.5" ry="8" fill="#e9e6e3"/><path d="M6.2 18.5C5.8 13 6 9 7.5 6.2C9 3.8 15 3.8 16.5 6.2C18 9 18.2 13 17.6 18.5Z" fill="#2e1d14"/><ellipse cx="12.1" cy="11.6" rx="3.9" ry="5" fill="#d8a48a"/><rect x="10.6" y="15" width="3.2" height="3.5" fill="#cf9a80"/></svg></div>
<div class="t" style="left:963.50px;top:770.70px;font-size:14px;color:#35a21f;">100%</div>
<div class="av" style="left:1096px;top:766px"><svg width="24" height="24" viewBox="0 0 24 24"><rect width="24" height="24" fill="#eceff2"/><rect x="0" y="9" width="8" height="12" fill="#c9d3e6"/><rect x="0" y="9" width="8" height="1.5" fill="#2c3a66"/><rect x="17" y="8" width="7" height="13" fill="#9b6c3e"/><path d="M3 24C5 19 9 17.5 13.5 17.5C18 17.5 21 19.5 22.5 24Z" fill="#252c45"/><ellipse cx="12.6" cy="12.3" rx="5.3" ry="6.3" fill="#dcb39d"/><path d="M7.2 10C6.8 4.8 10.5 3.2 13.3 3.2C16.8 3.2 19 5.2 18.6 10.5L17.6 8.2C15.5 6.6 10.5 6.6 8.2 8.2Z" fill="#1e1915"/></svg></div>
<div class="t" style="left:1435.20px;top:756.20px;font-size:12px;color:#333;letter-spacing:0.424px;">Millions of ancient</div>
<div class="t" style="left:1436.20px;top:772.20px;font-size:12px;color:#333;letter-spacing:0.424px;">stars spanning</div>
<div class="t" style="left:1436.20px;top:788.20px;font-size:12px;color:#333;letter-spacing:0.424px;">about 18,000 light-</div>
<svg class="abs" style="left:1569px;top:771px" width="16" height="14" viewBox="0 0 16 14"><path d="M4.5 2.5L1 7L4.5 11.5M11.5 2.5L15 7L11.5 11.5M9.5 1L6.5 13" fill="none" stroke="#0d95ff" stroke-width="1.6" stroke-linecap="round" stroke-linejoin="round"/></svg>
<div class="abs" style="left:320px;top:813px;width:1280px;height:70px;background:#fafafa"></div>
<div class="cb" style="left:341px;top:840px;border-color:#b9b2c6"></div>
<div class="t" style="left:388.75px;top:840.70px;font-size:14px;color:#2d2d2d;letter-spacing:0.343px;">12345685</div>
<div class="t" style="left:492.50px;top:840.70px;font-size:14px;color:#2d2d2d;letter-spacing:-0.107px;">Aug 20 2022,...</div>
<div class="t" style="left:644.00px;top:840.70px;font-size:14px;color:#2d2d2d;">1</div>
<div class="t" style="left:708.50px;top:840.70px;font-size:14px;color:#2d2d2d;">0</div>
<div class="t" style="left:772.00px;top:840.70px;font-size:14px;color:#2d2d2d;">2</div>
<div class="t" style="left:1256.00px;top:840.70px;font-size:14px;color:#2d2d2d;">1</div>
<div class="t" style="left:1320.00px;top:840.70px;font-size:14px;color:#2d2d2d;">1</div>
<div class="t" style="left:1384.50px;top:840.70px;font-size:14px;color:#2d2d2d;">0</div>
<div class="av" style="left:816px;top:836px"><svg width="24" height="24" viewBox="0 0 24 24"><rect width="24" height="24" fill="#eceff2"/><rect x="0" y="9" width="8" height="12" fill="#c9d3e6"/><rect x="0" y="9" width="8" height="1.5" fill="#2c3a66"/><rect x="17" y="8" width="7" height="13" fill="#9b6c3e"/><path d="M3 24C5 19 9 17.5 13.5 17.5C18 17.5 21 19.5 22.5 24Z" fill="#252c45"/><ellipse cx="12.6" cy="12.3" rx="5.3" ry="6.3" fill="#dcb39d"/><path d="M7.2 10C6.8 4.8 10.5 3.2 13.3 3.2C16.8 3.2 19 5.2 18.6 10.5L17.6 8.2C15.5 6.6 10.5 6.6 8.2 8.2Z" fill="#1e1915"/></svg></div>
<div class="t" style="left:963.50px;top:840.70px;font-size:14px;color:#35a21f;">95%</div>
<div class="av" style="left:1096px;top:836px"><svg width="24" height="24" viewBox="0 0 24 24"><rect width="24" height="24" fill="#eceff2"/><rect x="0" y="9" width="8" height="12" fill="#c9d3e6"/><rect x="0" y="9" width="8" height="1.5" fill="#2c3a66"/><rect x="17" y="8" width="7" height="13" fill="#9b6c3e"/><path d="M3 24C5 19 9 17.5 13.5 17.5C18 17.5 21 19.5 22.5 24Z" fill="#252c45"/><ellipse cx="12.6" cy="12.3" rx="5.3" ry="6.3" fill="#dcb39d"/><path d="M7.2 10C6.8 4.8 10.5 3.2 13.3 3.2C16.8 3.2 19 5.2 18.6 10.5L17.6 8.2C15.5 6.6 10.5 6.6 8.2 8.2Z" fill="#1e1915"/></svg></div>
<div class="t" style="left:1436.20px;top:826.20px;font-size:12px;color:#333;letter-spacing:0.424px;">Woodpeckers</div>
<div class="t" style="left:1436.20px;top:842.20px;font-size:12px;color:#333;letter-spacing:0.424px;">drum on trees and</div>
<div class="t" style="left:1436.20px;top:858.20px;font-size:12px;color:#333;letter-spacing:0.424px;">other objects</div>
<svg class="abs" style="left:1569px;top:841px" width="16" height="14" viewBox="0 0 16 14"><path d="M4.5 2.5L1 7L4.5 11.5M11.5 2.5L15 7L11.5 11.5M9.5 1L6.5 13" fill="none" stroke="#0d95ff" stroke-width="1.6" stroke-linecap="round" stroke-linejoin="round"/></svg>
<div class="abs" style="left:320px;top:883px;width:1280px;height:70px;background:#fff"></div>
<div class="cb" style="left:341px;top:910px;border-color:#b9b2c6"></div>
<div class="t" style="left:388.75px;top:910.70px;font-size:14px;color:#2d2d2d;letter-spacing:0.343px;">12345686</div>
<div class="t" style="left:492.50px;top:910.70px;font-size:14px;color:#2d2d2d;letter-spacing:-0.107px;">Aug 20 2022,...</div>
<div class="t" style="left:644.00px;top:910.70px;font-size:14px;color:#2d2d2d;">1</div>
<div class="t" style="left:708.50px;top:910.70px;font-size:14px;color:#2d2d2d;">0</div>
<div class="t" style="left:772.00px;top:910.70px;font-size:14px;color:#2d2d2d;">2</div>
<div class="t" style="left:1256.00px;top:910.70px;font-size:14px;color:#2d2d2d;">1</div>
<div class="t" style="left:1320.50px;top:910.70px;font-size:14px;color:#2d2d2d;">0</div>
<div class="t" style="left:1384.50px;top:910.70px;font-size:14px;color:#2d2d2d;">0</div>
<div class="av" style="left:816px;top:906px"><svg width="24" height="24" viewBox="0 0 24 24"><rect width="24" height="24" fill="#e3ddd2"/><rect x="2" y="1" width="3" height="9" fill="#bfb3a2"/><rect x="15" y="2" width="6" height="6" fill="#d2c6b4"/><rect y="9" width="24" height="11" fill="#7c9c48"/><rect x="16" y="9" width="8" height="4" fill="#a9c56a"/><ellipse cx="12" cy="25" rx="11.5" ry="8" fill="#e9e6e3"/><path d="M6.2 18.5C5.8 13 6 9 7.5 6.2C9 3.8 15 3.8 16.5 6.2C18 9 18.2 13 17.6 18.5Z" fill="#2e1d14"/><ellipse cx="12.1" cy="11.6" rx="3.9" ry="5" fill="#d8a48a"/><rect x="10.6" y="15" width="3.2" height="3.5" fill="#cf9a80"/></svg></div>
<div class="t" style="left:963.50px;top:910.70px;font-size:14px;color:#35a21f;">96%</div>
<div class="av" style="left:1096px;top:906px"><svg width="24" height="24" viewBox="0 0 24 24"><rect width="24" height="24" fill="#eceff2"/><rect x="0" y="9" width="8" height="12" fill="#c9d3e6"/><rect x="0" y="9" width="8" height="1.5" fill="#2c3a66"/><rect x="17" y="8" width="7" height="13" fill="#9b6c3e"/><path d="M3 24C5 19 9 17.5 13.5 17.5C18 17.5 21 19.5 22.5 24Z" fill="#252c45"/><ellipse cx="12.6" cy="12.3" rx="5.3" ry="6.3" fill="#dcb39d"/><path d="M7.2 10C6.8 4.8 10.5 3.2 13.3 3.2C16.8 3.2 19 5.2 18.6 10.5L17.6 8.2C15.5 6.6 10.5 6.6 8.2 8.2Z" fill="#1e1915"/></svg></div>
<div class="t" style="left:1435.20px;top:896.20px;font-size:12px;color:#333;letter-spacing:0.424px;">Specimens from</div>
<div class="t" style="left:1436.20px;top:912.20px;font-size:12px;color:#333;letter-spacing:0.424px;">Asia raise</div>
<div class="t" style="left:1436.20px;top:928.20px;font-size:12px;color:#333;letter-spacing:0.424px;">questions about</div>
<svg class="abs" style="left:1569px;top:911px" width="16" height="14" viewBox="0 0 16 14"><path d="M4.5 2.5L1 7L4.5 11.5M11.5 2.5L15 7L11.5 11.5M9.5 1L6.5 13" fill="none" stroke="#0d95ff" stroke-width="1.6" stroke-linecap="round" stroke-linejoin="round"/></svg>
<div class="abs" style="left:320px;top:953px;width:1280px;height:70px;background:#fafafa"></div>
<div class="cb" style="left:341px;top:980px;border-color:#b9b2c6"></div>
<div class="t" style="left:388.75px;top:980.70px;font-size:14px;color:#2d2d2d;letter-spacing:0.343px;">12345687</div>
<div class="t" style="left:492.50px;top:980.70px;font-size:14px;color:#2d2d2d;letter-spacing:-0.107px;">Aug 20 2022,...</div>
<div class="t" style="left:644.00px;top:980.70px;font-size:14px;color:#2d2d2d;">1</div>
<div class="t" style="left:708.50px;top:980.70px;font-size:14px;color:#2d2d2d;">0</div>
<div class="t" style="left:772.00px;top:980.70px;font-size:14px;color:#2d2d2d;">2</div>
<div class="t" style="left:1256.00px;top:980.70px;font-size:14px;color:#2d2d2d;">1</div>
<div class="t" style="left:1320.50px;top:980.70px;font-size:14px;color:#2d2d2d;">0</div>
<div class="t" style="left:1384.50px;top:980.70px;font-size:14px;color:#2d2d2d;">0</div>
<div class="av" style="left:816px;top:976px"><svg width="24" height="24" viewBox="0 0 24 24"><rect width="24" height="24" fill="#e3ddd2"/><rect x="2" y="1" width="3" height="9" fill="#bfb3a2"/><rect x="15" y="2" width="6" height="6" fill="#d2c6b4"/><rect y="9" width="24" height="11" fill="#7c9c48"/><rect x="16" y="9" width="8" height="4" fill="#a9c56a"/><ellipse cx="12" cy="25" rx="11.5" ry="8" fill="#e9e6e3"/><path d="M6.2 18.5C5.8 13 6 9 7.5 6.2C9 3.8 15 3.8 16.5 6.2C18 9 18.2 13 17.6 18.5Z" fill="#2e1d14"/><ellipse cx="12.1" cy="11.6" rx="3.9" ry="5" fill="#d8a48a"/><rect x="10.6" y="15" width="3.2" height="3.5" fill="#cf9a80"/></svg></div>
<div class="t" style="left:963.50px;top:980.70px;font-size:14px;color:#35a21f;">93%</div>
<div class="av" style="left:1096px;top:976px"><svg width="24" height="24" viewBox="0 0 24 24"><rect width="24" height="24" fill="#eceff2"/><rect x="0" y="9" width="8" height="12" fill="#c9d3e6"/><rect x="0" y="9" width="8" height="1.5" fill="#2c3a66"/><rect x="17" y="8" width="7" height="13" fill="#9b6c3e"/><path d="M3 24C5 19 9 17.5 13.5 17.5C18 17.5 21 19.5 22.5 24Z" fill="#252c45"/><ellipse cx="12.6" cy="12.3" rx="5.3" ry="6.3" fill="#dcb39d"/><path d="M7.2 10C6.8 4.8 10.5 3.2 13.3 3.2C16.8 3.2 19 5.2 18.6 10.5L17.6 8.2C15.5 6.6 10.5 6.6 8.2 8.2Z" fill="#1e1915"/></svg></div>
<div class="t" style="left:1435.20px;top:966.20px;font-size:12px;color:#333;letter-spacing:0.424px;">Big fish in shallow</div>
<div class="t" style="left:1436.20px;top:982.20px;font-size:12px;color:#333;letter-spacing:0.424px;">water are easy</div>
<div class="t" style="left:1435.20px;top:998.20px;font-size:12px;color:#333;letter-spacing:0.424px;">pickings for one</div>
<svg class="abs" style="left:1569px;top:981px" width="16" height="14" viewBox="0 0 16 14"><path d="M4.5 2.5L1 7L4.5 11.5M11.5 2.5L15 7L11.5 11.5M9.5 1L6.5 13" fill="none" stroke="#0d95ff" stroke-width="1.6" stroke-linecap="round" stroke-linejoin="round"/></svg>
</div></div>
<div class="wb"></div>
<div class="co" style="left:858px;top:19px;width:181px;height:32px"></div>
<div class="t" style="left:873.40px;top:26.90px;font-size:16px;color:#fff;letter-spacing:0.139px;-webkit-text-stroke:0.35px #fff;">Start Review Stream</div>
<div class="co" style="left:1047px;top:18px;width:169px;height:32px"></div>
<div class="t" style="left:1062.50px;top:26.50px;font-size:16px;color:#fff;letter-spacing:0.176px;-webkit-text-stroke:0.35px #fff;">Start Label Stream</div>
<div class="co" style="left:220px;top:195px;width:68px;height:32px"></div>
<div class="t" style="left:237.00px;top:203.30px;font-size:16px;color:#fff;letter-spacing:-0.167px;-webkit-text-stroke:0.35px #fff;">Tabs</div>
<div class="co" style="left:65px;top:239px;width:223px;height:32px"></div>
<div class="t" style="left:81.50px;top:247.30px;font-size:16px;color:#fff;letter-spacing:0.352px;-webkit-text-stroke:0.35px #fff;">Actions for selected tasks</div>
<div class="co" style="left:101px;top:406px;width:187px;height:46px"></div>
<div class="t" style="left:117.20px;top:414.10px;font-size:16px;color:#fff;letter-spacing:0.078px;-webkit-text-stroke:0.35px #fff;">Task (Row)</div>
<div class="t" style="left:117.20px;top:433.60px;font-size:11.5px;color:#fff;letter-spacing:0.531px;font-style:italic;-webkit-text-stroke:0.2px #fff;">Click to open in Quick View</div>
<div class="co" style="left:101px;top:762px;width:193px;height:31px"></div>
<div class="t" style="left:118.00px;top:770.20px;font-size:16px;color:#fff;letter-spacing:0.211px;-webkit-text-stroke:0.35px #fff;">Task Completion Date</div>
<div class="co" style="left:91px;top:832px;width:203px;height:31px"></div>
<div class="t" style="left:107.00px;top:840.20px;font-size:16px;color:#fff;letter-spacing:0.300px;-webkit-text-stroke:0.35px #fff;">Number of Annotations</div>
<div class="co" style="left:29px;top:901px;width:265px;height:31px"></div>
<div class="t" style="left:44.00px;top:909.20px;font-size:16px;color:#fff;letter-spacing:0.286px;-webkit-text-stroke:0.35px #fff;">Number of Skipped Annotations</div>
<div class="co" style="left:97px;top:972px;width:197px;height:31px"></div>
<div class="t" style="left:112.50px;top:980.20px;font-size:16px;color:#fff;letter-spacing:0.350px;-webkit-text-stroke:0.35px #fff;">Number of Predictions</div>
<div class="co" style="left:1632px;top:195px;width:168px;height:31px"></div>
<div class="t" style="left:1648.50px;top:203.20px;font-size:16px;color:#fff;letter-spacing:0.235px;-webkit-text-stroke:0.35px #fff;">Task List Counters</div>
<div class="co" style="left:1632px;top:278px;width:120px;height:46px"></div>
<div class="t" style="left:1647.50px;top:286.20px;font-size:16px;color:#fff;letter-spacing:0.125px;-webkit-text-stroke:0.35px #fff;">Data Type</div>
<div class="t" style="left:1648.50px;top:305.20px;font-size:11.5px;color:#fff;letter-spacing:0.571px;font-style:italic;-webkit-text-stroke:0.2px #fff;">Click to change</div>
<div class="co" style="left:1632px;top:336px;width:166px;height:46px"></div>
<div class="t" style="left:1647.50px;top:344.20px;font-size:16px;color:#fff;letter-spacing:0.133px;-webkit-text-stroke:0.35px #fff;">Show Task Source</div>
<div class="t" style="left:1648.50px;top:363.20px;font-size:11.5px;color:#fff;letter-spacing:0.267px;font-style:italic;-webkit-text-stroke:0.2px #fff;">Click to display</div>
<div class="co" style="left:1632px;top:525px;width:165px;height:32px"></div>
<div class="t" style="left:1648.50px;top:533.20px;font-size:16px;color:#fff;letter-spacing:0.100px;-webkit-text-stroke:0.35px #fff;">Task Data Column</div>
<div class="co" style="left:676px;top:1037px;width:305px;height:32px"></div>
<div class="t" style="left:692.50px;top:1045.20px;font-size:16px;color:#fff;letter-spacing:0.353px;-webkit-text-stroke:0.35px #fff;">Annotators of Submitted Annotations</div>
<div class="co" style="left:1026px;top:1037px;width:187px;height:32px"></div>
<div class="t" style="left:1043.00px;top:1045.20px;font-size:16px;color:#fff;letter-spacing:0.111px;-webkit-text-stroke:0.35px #fff;">Accepted (Reviewed)</div>
<div class="co" style="left:1233px;top:1037px;width:181px;height:32px"></div>
<div class="t" style="left:1248.50px;top:1045.20px;font-size:16px;color:#fff;letter-spacing:0.056px;-webkit-text-stroke:0.35px #fff;">Rejected (Reviewed)</div>
<div class="co" style="left:1434px;top:1037px;width:280px;height:32px"></div>
<div class="t" style="left:1449.50px;top:1045.20px;font-size:16px;color:#fff;letter-spacing:0.214px;-webkit-text-stroke:0.35px #fff;">Number of Unresolved Comments</div>
<svg class="abs" style="left:0;top:0" width="1920" height="1080" fill="none" stroke="#ff9100" stroke-width="2" stroke-linecap="round" stroke-linejoin="round"><path d="M947.6 51V238"/><path d="M941.0 231.4L947.6 238L954.2 231.4"/><path d="M1131.2 50V238"/><path d="M1124.6000000000001 231.4L1131.2 238L1137.8 231.4"/><path d="M288 211H320"/><path d="M313.4 204.4L320 211L313.4 217.6"/><path d="M288 255H336"/><path d="M329.4 248.4L336 255L329.4 261.6"/><path d="M288 429H320"/><path d="M313.4 422.4L320 429L313.4 435.6"/><path d="M294 778H491"/><path d="M484.4 771.4L491 778L484.4 784.6"/><path d="M294 848H632"/><path d="M625.4 841.4L632 848L625.4 854.6"/><path d="M294 917H696"/><path d="M689.4 910.4L696 917L689.4 923.6"/><path d="M294 988H759"/><path d="M752.4 981.4L759 988L752.4 994.6"/><path d="M1632 211H1600"/><path d="M1606.6 204.4L1600 211L1606.6 217.6"/><path d="M1632 301H1545"/><path d="M1551.6 294.4L1545 301L1551.6 307.6"/><path d="M1632 358H1587"/><path d="M1593.6 351.4L1587 358L1593.6 364.6"/><path d="M1632 541H1495Q1491 541 1491 537V523"/><path d="M1484.4 529.6L1491 523L1497.6 529.6"/><path d="M828 1037V1008M820 1008H837"/><path d="M1119 1037V1027Q1119 1023 1123 1023H1256Q1260 1023 1260 1019V1010.5"/><path d="M1253.4 1017.1L1260 1010.5L1266.6 1017.1"/><path d="M1323.3 1037V1010.5"/><path d="M1316.7 1017.1L1323.3 1010.5L1329.8999999999999 1017.1"/><path d="M1574 1037V1027Q1574 1023 1570 1023H1391.6Q1387.6 1023 1387.6 1019V1010.5"/><path d="M1381.0 1017.1L1387.6 1010.5L1394.1999999999998 1017.1"/></svg>
</body></html>
